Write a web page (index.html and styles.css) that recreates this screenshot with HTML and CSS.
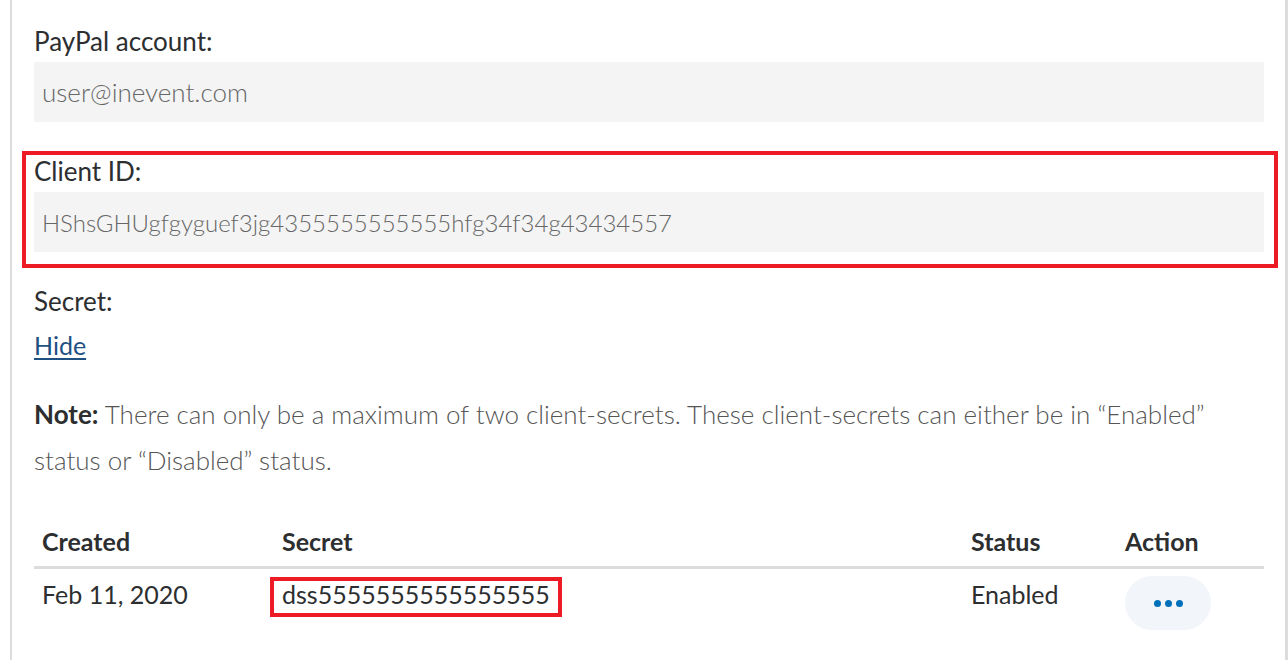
FILE: index.html
```html
<!DOCTYPE html>
<html lang="en">
<head>
    <meta charset="UTF-8">
    <meta name="viewport" content="width=device-width, initial-scale=1.0">
    <title>PayPal settings</title>
    <link rel="stylesheet" href="styles.css">
</head>
<body>
    <div class="panel">
        <div class="field">
            <div class="label">PayPal account:</div>
            <div class="value">user@inevent.com</div>
        </div>

        <div class="field marked">
            <div class="label">Client ID:</div>
            <div class="value value-id">HShsGHUgfgyguef3jg4355555555555hfg34f34g43434557</div>
        </div>

        <div class="label secret-label">Secret:</div>
        <a class="hide-link" href="#">Hide</a>

        <p class="note"><strong>Note:</strong> There can only be a maximum of two client-secrets. These client-secrets can either be in “Enabled” status or “Disabled” status.</p>

        <table class="secrets">
            <thead>
                <tr>
                    <th class="col-created">Created</th>
                    <th class="col-secret">Secret</th>
                    <th class="col-status">Status</th>
                    <th class="col-action">Action</th>
                </tr>
            </thead>
            <tbody>
                <tr>
                    <td>Feb 11, 2020</td>
                    <td><span class="secret-value">dss5555555555555555</span></td>
                    <td>Enabled</td>
                    <td>
                        <button class="more-btn" aria-label="More actions">
                            <span class="dot"></span><span class="dot"></span><span class="dot"></span>
                        </button>
                    </td>
                </tr>
            </tbody>
        </table>
    </div>
</body>
</html>
```

FILE: styles.css
```css
body {
    margin: 0;
    background: #fff;
    font-family: 'Lato', 'Noto Sans', sans-serif;
    color: #2c2e2f;
}

.panel {
    margin-left: 10px;
    width: 1278px;
    min-height: 660px;
    box-sizing: border-box;
    border-left: 2px solid #dcdcdc;
    border-right: 3px solid #dcdcdc;
    padding: 25px 21px 0 22px;
}

.field {
    position: relative;
    margin-bottom: 33px;
}

.label {
    font-size: 26px;
    line-height: 32px;
    margin-bottom: 5px;
}

.value {
    height: 60px;
    background: #f4f4f4;
    padding: 0 8px;
    display: flex;
    align-items: center;
    font-size: 26px;
    font-weight: 300;
    color: #666;
}

.value-id {
    font-size: 24px;
}

/* annotation frame around the client id */
.marked::after {
    content: '';
    position: absolute;
    top: -4px;
    left: -12px;
    right: -14px;
    bottom: -16px;
    border: 4px solid #ed1c24;
}

.secret-label {
    margin-bottom: 12px;
}

.hide-link {
    display: inline-block;
    font-size: 25px;
    line-height: 32px;
    color: #1f5082;
    text-decoration: underline;
    text-underline-offset: 3px;
}

.note {
    margin: 30px 0 0;
    font-size: 26px;
    line-height: 46px;
    font-weight: 300;
    color: #555;
}

.note strong {
    font-weight: 700;
    color: #2c2e2f;
}

.secrets {
    width: 100%;
    margin-top: 37px;
    border-collapse: collapse;
    font-size: 25px;
}

.secrets th {
    text-align: left;
    font-weight: 700;
    padding: 6px 8px 10px;
    border-bottom: 3px solid #dcdcdc;
}

.secrets td {
    padding: 10px 8px 7px;
    vertical-align: top;
    line-height: 30px;
}

.col-created { width: 224px; }
.col-secret { width: 673px; }
.col-status { width: 138px; }

.secret-value {
    position: relative;
}

.secret-value::after {
    content: '';
    position: absolute;
    top: -2px;
    left: -12px;
    right: -12px;
    bottom: -8px;
    border: 4px solid #ed1c24;
}

.more-btn {
    width: 86px;
    height: 54px;
    border: none;
    border-radius: 27px;
    background: #f2f5f9;
    display: flex;
    justify-content: center;
    align-items: center;
    gap: 4px;
    margin-top: -3px;
    cursor: pointer;
}

.dot {
    width: 7px;
    height: 7px;
    border-radius: 50%;
    background: #0070ba;
}
```
